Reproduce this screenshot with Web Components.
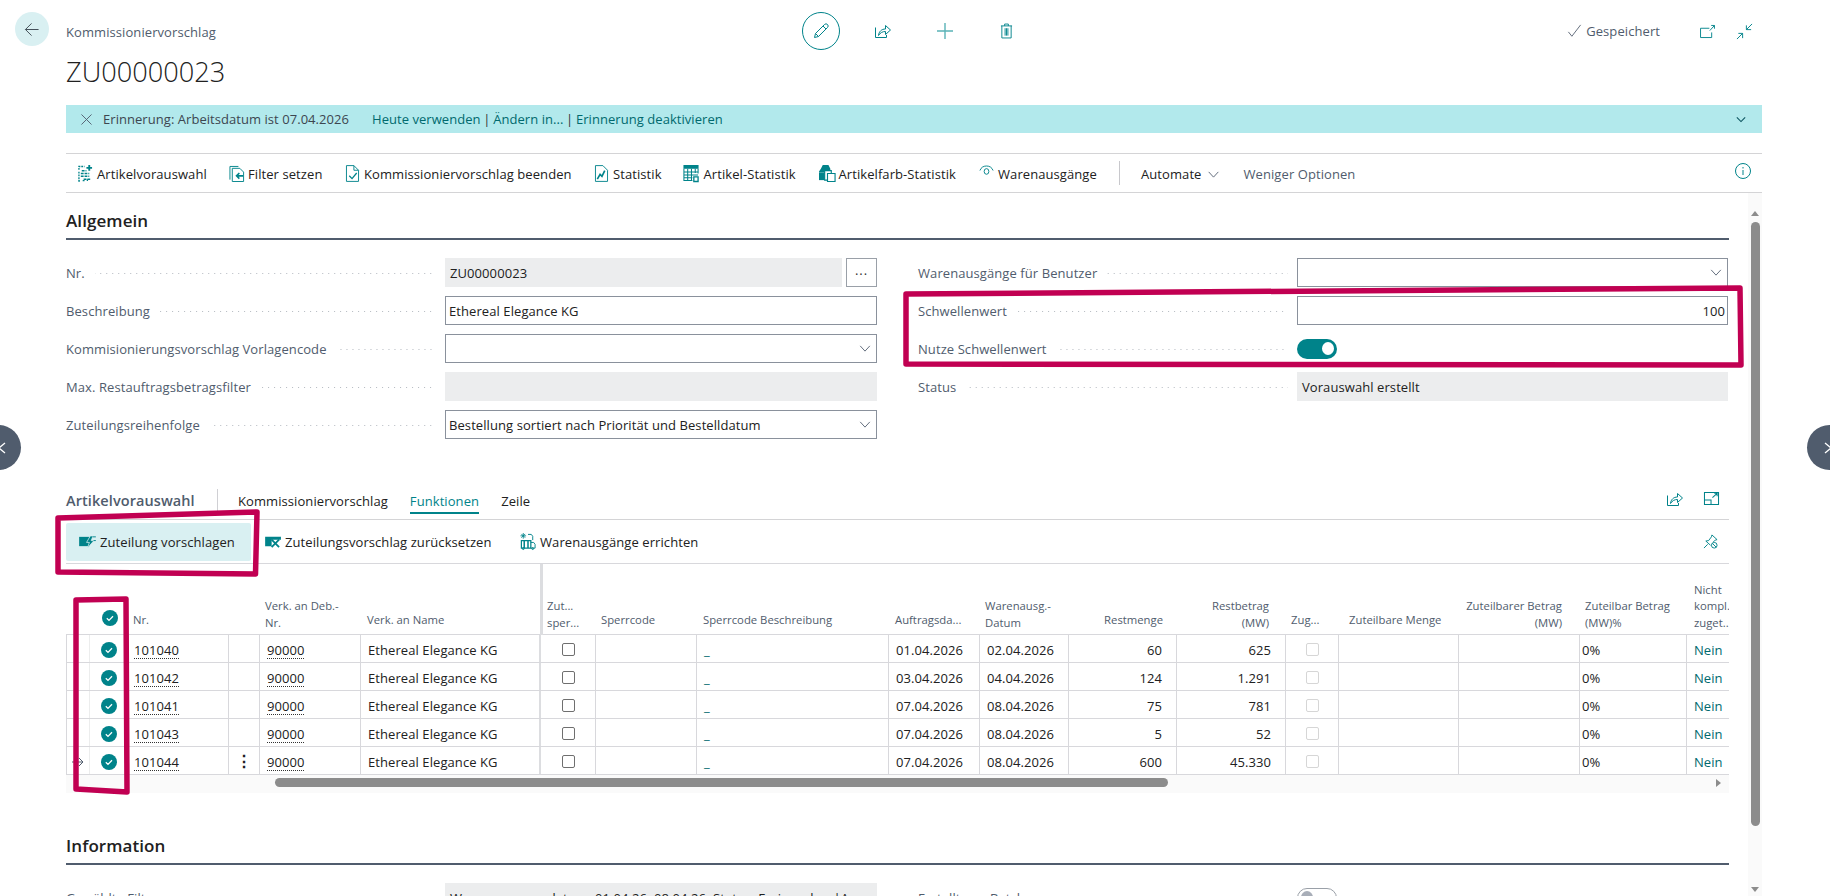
<!DOCTYPE html>
<html lang="de"><head><meta charset="utf-8"><title>Kommissioniervorschlag</title>
<style>
html,body{margin:0;padding:0;background:#fff;overflow:hidden}
body{font:13px/18px "Open Sans","Noto Sans",sans-serif;color:#212121}
</style></head><body>
<bc-app></bc-app>
<script>
const T='#00838a';
const I={
back:`<svg viewBox="0 0 16 16" fill="none" stroke="#3c4650" stroke-width="1"><path d="M15 8H1M7.500 1.500 1 8l6.500 6.500"/></svg>`,
pencil:`<svg viewBox="0 0 16 16" fill="none" stroke="${T}"><path d="M1.500 14.500l1-4L11.500 1.500a1.500 1.500 0 0 1 3 3l-9 9zM2.500 10.500l3 3M10 3l3 3"/></svg>`,
share:`<svg viewBox="0 0 16 16" fill="none" stroke="${T}"><path d="M.5 4.500v10h11v-2.500M3.500 12.500c.5-4 3-6.500 7-6.500V2.500L15.500 7l-5 4.500V8.500c-3 0-5 1-7 4z"/></svg>`,
plus:`<svg viewBox="0 0 16 16" fill="none" stroke="#5ab3b7" stroke-width="1.400"><path d="M8 0v16M0 8h16"/></svg>`,
trash:`<svg viewBox="0 0 14 16" fill="none" stroke="${T}"><path d="M1 2.500h12M2 2.500v13h10v-13M5 2.500V.5h4v2M5.500 5v8M7 5v8M8.500 5v8"/></svg>`,
check:`<svg viewBox="0 0 16 16" fill="none" stroke="#505c6d"><path d="M1 9l4 5L15 1"/></svg>`,
open:`<svg viewBox="0 0 16 14" fill="none" stroke="${T}" stroke-width="1"><path d="M10 3.500H.5v10h12V8M10.500 6l5-5.500M12 .5h3.500V4"/></svg>`,
collapse:`<svg viewBox="0 0 18 18" fill="none" stroke="${T}"><path d="M17 1l-6 6M11 2.500V7h5M1 17l6-6M2.500 11H7v5"/></svg>`,
x:`<svg viewBox="0 0 12 12" fill="none" stroke="#505c6d"><path d="M.5.5l11 11M11.500.5l-11 11"/></svg>`,
chev:`<svg viewBox="0 0 12 8" fill="none" stroke="#505c6d"><path d="M.5 1L6 7l5.500-6"/></svg>`,
chevT:`<svg viewBox="0 0 12 8" fill="none" stroke="#0b5560" stroke-width="1.300"><path d="M1 1.500L6 6.500l5-5"/></svg>`,
info:`<svg viewBox="0 0 16 16" fill="none" stroke="${T}"><circle cx="8" cy="8" r="7.500"/><path d="M8 7v5M8 4v1.500"/></svg>`,
av:`<svg viewBox="0 0 16 18" fill="none" stroke="${T}" stroke-width="1.400"><path d="M1 5V1.500h6M1 7v10h2M5 16.500h2M10 17v-2" stroke-dasharray="2 1"/><path d="M12 0v6M9 3h6" stroke-width="2"/><path d="M4 6h5M3 9h9M3 12h9M6 15h7" stroke-width="1.600" stroke-dasharray="3 1"/></svg>`,
filter:`<svg viewBox="0 0 17 18" fill="none" stroke="${T}"><path d="M1 1.500v14M1 1.500h9M3.500 17.500V3.500h8l4 4v10z"/><path d="M15 11.500H8M11 8.500l-3 3 3 3" stroke-width="1.700"/></svg>`,
finish:`<svg viewBox="0 0 14 18" fill="none" stroke="${T}"><path d="M.5.5h8l5 5v12H.5z"/><path d="M8.500.5v5h5"/><path d="M3.500 11.500l3 3 5-6" stroke-width="1.400"/></svg>`,
stat:`<svg viewBox="0 0 14 18" fill="none" stroke="${T}"><path d="M.5.5h8l5 5v12H.5z"/><path d="M2.500 15l3-5 2 2 3-6" stroke-width="1.800"/></svg>`,
astat:`<svg viewBox="0 0 16 18"><path d="M0 0h16v4H0z" fill="${T}"/><g fill="none" stroke="${T}" stroke-width="1.100"><path d="M.5 4v12.500h9M.5 7.500h15M.5 10.500h15M.5 13.500h9M4.500 4v12.500M8.500 4v12.500M12.500 4v4.500M15.500 4v5"/><path d="M11 12.500h4.500v5H11z" stroke-width="1.400"/></g></svg>`,
afarb:`<svg viewBox="0 0 18 18"><path d="M0 7l2-3h10v4H0zM4 0h6l2 4H2z" fill="${T}"/><path d="M0 8h8v8H0z" fill="${T}"/><g fill="#fff" stroke="${T}" stroke-width="1.200"><path d="M6 6h7v10H6z"/><path d="M9 9h8v8.500H9z"/></g></svg>`,
wa:`<svg viewBox="0 0 18 16" fill="none" stroke="${T}"><path d="M2 8a7.500 7.500 0 0 1 14 0"/><ellipse cx="9" cy="9" rx="2.500" ry="3"/></svg>`,
zv:`<svg viewBox="0 0 18 14"><path d="M0 2h11v10H0z" fill="${T}"/><path d="M12 1l-4 7h3l-2 6 7-8h-3l2-5z" fill="${T}" stroke="#d9f0f2" stroke-width=".8"/><path d="M14.500 2H18M15.500 6H18" stroke="${T}"/></svg>`,
zr:`<svg viewBox="0 0 18 14"><path d="M0 2h17v3H0zM0 5h7v7H0z" fill="${T}"/><path d="M7 5l8 8M15 5l-8 8" stroke="${T}" stroke-width="2" fill="none"/></svg>`,
we:`<svg viewBox="0 0 16 18" fill="none" stroke="${T}"><path d="M3 0v6M0 3h6M1 1l4 4M5 1L1 5" stroke-width=".9"/><path d="M8 1.500h3.500l1.500 2v4"/><path d="M1 8h10v8H1z" stroke-width="1.300"/><path d="M4 8v8M8 8v8" stroke-width="1.600"/><path d="M11 10h3l1.500 2v4H11"/><circle cx="3" cy="16.500" r="1"/><circle cx="13" cy="16.500" r="1"/></svg>`,
open2:`<svg viewBox="0 0 16 16" fill="none" stroke="${T}" stroke-width="1.100"><path d="M.5 1.500h15v13H.5zM.5 9.500h7v5M9 7l5-4.500M11 2.500h3v3"/></svg>`,
pin:`<svg viewBox="0 0 16 16" fill="none" stroke="${T}"><path d="M1 15l4-4M3 7.500l3-.5 3-4 .5-2L15 6l-2 .5-2 2M3 7.500L8 12"/><circle cx="12" cy="12" r="3"/><path d="M10 10l4 4"/></svg>`,
};
function def(name,css,html){
  customElements.define(name,class extends HTMLElement{
    constructor(){super();this.attachShadow({mode:'open'})}
    connectedCallback(){
      const h=typeof html==='function'?html(this):html;
      this.shadowRoot.innerHTML=`<style>${css}</style>${h}`;
    }
  });
}
/* icon */
def('bc-icon',`:host{display:inline-flex;align-items:center;justify-content:center;flex:none}svg{display:block;width:100%;height:100%;overflow:visible}`,
 e=>I[e.getAttribute('name')]);

/* page header */
def('bc-header',`
:host{display:block;height:105px;box-sizing:border-box;padding-top:12px}
.top{display:flex;align-items:center;height:38px}
.back{width:34px;height:34px;margin:-4px 17px 0 -51px;border-radius:50%;background:#d9f0f2;display:flex;align-items:center;justify-content:center;flex:none}
.back bc-icon{width:16px;height:15px}
.crumb{flex:0 0 736px;color:#505c6d;margin-top:1px}
.acts{display:flex;align-items:center}
.edit{width:36px;height:36px;border:1px solid ${T};border-radius:50%;display:flex;align-items:center;justify-content:center}
.edit bc-icon{width:16px;height:16px}
.right{margin-left:auto;margin-right:9px;display:flex;align-items:center;color:#505c6d}
h1{margin:4px 0 0;font-weight:300;font-size:27.200px;letter-spacing:0;line-height:36px;color:#212121}
`,`<div class="top"><div class="back"><bc-icon name="back"></bc-icon></div>
<div class="crumb">Kommissioniervorschlag</div>
<div class="acts"><div class="edit"><bc-icon name="pencil"></bc-icon></div>
<bc-icon name="share" style="width:16px;height:16px;margin-left:35px"></bc-icon>
<bc-icon name="plus" style="width:16px;height:16px;margin-left:46px"></bc-icon>
<bc-icon name="trash" style="width:13px;height:16px;margin-left:47px"></bc-icon></div>
<div class="right"><bc-icon name="check" style="width:15px;height:14px;margin-right:4px"></bc-icon><span>Gespeichert</span>
<bc-icon name="open" style="width:15px;height:13px;margin-left:40px"></bc-icon>
<bc-icon name="collapse" style="width:17px;height:17px;margin-left:21px"></bc-icon></div></div>
<h1>ZU00000023</h1>`);

/* reminder banner */
def('bc-banner',`
:host{display:flex;align-items:center;height:28px;background:#b2e9ec;color:#3c4650;letter-spacing:.05px}
bc-icon.x{width:11px;height:11px;margin:0 11px 0 15px}
a{color:#00696e;text-decoration:none}
.s{margin:0 2.700px;color:#333}
.msg{margin-right:23px}
.c{margin-left:auto;margin-right:16px;width:10px;height:7px}
`,`<bc-icon class="x" name="x"></bc-icon><span class="msg">Erinnerung: Arbeitsdatum ist 07.04.2026</span>
<a>Heute verwenden</a><span class="s">|</span><a>Ändern in...</a><span class="s">|</span><a>Erinnerung deaktivieren</a>
<bc-icon class="c" name="chevT"></bc-icon>`);

/* action button */
def('bc-action',`
:host{display:inline-flex;align-items:center;flex:none;color:#212121;white-space:nowrap;height:38px;box-sizing:border-box}
bc-icon{width:16px;height:17px;margin-right:var(--g,4px)}
`,e=>`<bc-icon name="${e.getAttribute('icon')}" style="${e.getAttribute('istyle')||''}"></bc-icon><slot></slot>`);

/* main toolbar */
def('bc-toolbar',`
:host{display:flex;align-items:center;height:40px;margin-top:20px;box-sizing:border-box;border-top:1.500px solid #d4d4d6;border-bottom:1.500px solid #d4d4d6;padding:2px 0 0 12px}
.sep{width:1px;height:24px;background:#c8c8cc;margin-right:21px;margin-top:-2px}
.a{color:#212121}.ch{width:11px;height:7px;margin:1px 24px 0 7px}
.g{color:#505c6d}.i{width:16px;height:16px;margin-left:auto;margin-right:11px;margin-top:-6px}
`,`<bc-action icon="av" style="width:151px;--g:4px" istyle="width:15px;margin-top:-2px"><span>Artikelvorauswahl</span></bc-action>
<bc-action icon="filter" style="width:117px;--g:3px" istyle="margin-top:-2px"><span>Filter setzen</span></bc-action>
<bc-action icon="finish" style="width:249px;--g:5px" istyle="width:13px;margin-top:-2px"><span>Kommissioniervorschlag beenden</span></bc-action>
<bc-action icon="stat" style="width:87.500px;--g:5px" istyle="width:13px;margin-top:-2px"><span>Statistik</span></bc-action>
<bc-action icon="astat" style="width:136px;--g:5px" istyle="margin-top:-2px"><span>Artikel-Statistik</span></bc-action>
<bc-action icon="afarb" style="width:159.500px;--g:3px" istyle="width:17px;margin-top:-2px"><span>Artikelfarb-Statistik</span></bc-action>
<bc-action icon="wa" style="width:141px;--g:3px" istyle="width:17px;height:15px;margin-top:-7px"><span>Warenausgänge</span></bc-action>
<div class="sep"></div><span class="a">Automate</span><bc-icon class="ch" name="chev"></bc-icon><span class="g">Weniger Optionen</span>
<bc-icon class="i" name="info"></bc-icon>`);

/* section heading */
def('bc-section',`
:host{display:block}
h2{margin:0;font-weight:600;font-size:17px;line-height:22px;color:#212121;padding-bottom:6px;border-bottom:2px solid #505c6d}
.grid{display:grid;grid-template-columns:811px 810px;column-gap:41px;padding-top:18px;row-gap:9px}
`,e=>`<h2>${e.getAttribute('title')}</h2><div class="grid"><slot></slot></div>`);

/* field */
def('bc-field',`
:host{display:flex;height:29px;align-items:center;min-width:0}
.l{flex:0 0 379px;display:flex;align-items:center;height:100%;color:#505c6d;box-sizing:border-box;padding-right:9px}
.l span{white-space:nowrap;margin-right:10px}
.d{flex:1;height:1px;margin-top:2px;background:linear-gradient(to right,#b4b9c0 1px,transparent 1px) right/6px 1px repeat-x}
.f{flex:1;height:100%;box-sizing:border-box;display:flex;align-items:center;padding:0 2px 0 3px;border:1px solid #8a919c;white-space:nowrap;overflow:hidden;color:#212121;min-width:0}
.ro{background:#ecedee;border:0;padding:0 5px}
.num{justify-content:flex-end}
.f bc-icon{width:12px;height:7px;margin-left:auto;margin-right:3px}
.more{flex:0 0 31px;height:100%;box-sizing:border-box;border:1px solid #9aa0a8;margin-left:4px;display:flex;align-items:center;justify-content:center;letter-spacing:1px;line-height:1;padding-bottom:5px;color:#333}
.tg{width:40px;height:20px;border-radius:10px;background:${T};display:flex;align-items:center;justify-content:flex-end;padding-right:3px;box-sizing:border-box}
.tg i{display:block;width:12px;height:13px;border-radius:50%;background:#fff}
.tg.off{background:#fff;border:1px solid #9aa0a8;justify-content:flex-start;padding:0 0 0 3px}
.tg.off i{background:#a8aeb8}
`,e=>{
 const k=e.getAttribute('kind')||'text',v=e.getAttribute('value')||'';
 let c;
 if(k==='toggle'||k==='off')c=`<div class="tg ${k==='off'?'off':''}"><i></i></div><div style="flex:1"></div>`;
 else c=`<div class="f ${k==='ro'||k==='romore'?'ro':''} ${k==='num'?'num':''}">${v}${k==='sel'?'<bc-icon name="chev"></bc-icon>':''}</div>${k==='romore'?'<div class="more">...</div>':''}`;
 return `<div class="l"><span>${e.getAttribute('label')}</span><div class="d"></div></div>${c}`;
});

/* grid table */
const COLS=[66,90,129,229,260,361,541,596,697,889,980,1069,1177,1286,1339,1459,1580,1687,1729];
const TPL=COLS.slice(1).map((c,i)=>(c-COLS[i])+'px').join(' ');
const HEAD=[['',''],['@',''],['Nr.','',133],['',''],['Verk. an Deb.-<br>Nr.','',265],['Verk. an Name','',367],['Zut...<br>sper...','',547],['Sperrcode','',601],['Sperrcode Beschreibung','',703],['Auftragsda...','',895],['Warenausg.-<br>Datum','',985],['Restmenge','r',1163],['Restbetrag<br>(MW)','r',1269],['Zug...','',1291],['Zuteilbare Menge','',1349],['Zuteilbarer Betrag<br>(MW)','r',1562],['Zuteilbar Betrag<br>(MW)%','',1585],['Nicht<br>kompl.<br>zuget...','',1694]];
const ROWS=[['101040','01.04.2026','02.04.2026','60','625'],['101042','03.04.2026','04.04.2026','124','1.291'],['101041','07.04.2026','08.04.2026','75','781'],['101043','07.04.2026','08.04.2026','5','52'],['101044','07.04.2026','08.04.2026','600','45.330']];
const mark=`<svg viewBox="0 0 16 16" width="16" height="16"><circle cx="8" cy="8" r="8" fill="${T}"/><path d="M4.800 8.200l2.200 2.200 4-4.200" fill="none" stroke="#fff" stroke-width="1.300"/></svg>`;
def('bc-table',`
:host{display:block;position:relative;width:1663px;overflow:hidden}
.h,.r{display:grid;grid-template-columns:${TPL};position:relative}
.h{height:71px;border-bottom:1.500px solid #d8d8dc;box-sizing:border-box;align-items:end;font-size:11.300px;letter-spacing:0;line-height:16.500px;color:#505c6d}
.h div{padding-bottom:6px;white-space:nowrap;position:relative;overflow:hidden}
.h div.m{padding-bottom:3px}
.h .sel{padding-bottom:8px;display:flex;justify-content:center}
.r{height:28px;box-sizing:border-box;border-bottom:1px solid #d8d8dc;font-size:13px;line-height:18px}
.c{display:flex;align-items:center;box-sizing:border-box;border-right:1px solid #d8d8dc;white-space:nowrap;padding:2px 0 0 7px;min-width:0;height:27px}
.c:first-child{border-left:1px solid #d8d8dc}
.num{justify-content:flex-end;padding:2px 14px 0 0}
.mk{border-right-color:#eceded;padding:2px 0 0;justify-content:center;color:#505c6d}
.lnk u{text-decoration:underline dotted #333 1px;text-underline-offset:3px}
.fz{border-right:2.500px solid #dcdde0}
.cb{width:13px;height:13px;box-sizing:border-box;border:1px solid #6f6f6f;border-radius:2px;margin:auto;position:relative}
.cb.dis{border-color:#d6d6d6}
.t{color:#00696e}
.us{color:#00696e}
.dots{justify-content:center;padding:0;font-weight:700;font-size:16px;line-height:1}
.divider{position:absolute;left:474px;top:0;height:71px;width:2.500px;background:#dcdde0}
.sb{height:18px;background:#fafafa;position:relative;display:flex;align-items:center}
.th{margin-left:209px;width:893px;height:9px;border-radius:5px;background:#8c8c8c;margin-top:-3px}
.ar{margin-left:auto;margin-right:8px;margin-top:-3px;width:0;height:0;border-left:5px solid #8c8c8c;border-top:4px solid transparent;border-bottom:4px solid transparent}
`,()=>{
 let h=`<div class="h">`;
 HEAD.forEach((c,i)=>{
  if(c[0]==='@'){h+=`<div class="sel">${mark}</div>`;return}
  const st=c[2]!==undefined?(c[1]==='r'?`text-align:right;padding-right:${COLS[i+1]-c[2]}px`:`padding-left:${c[2]-COLS[i]}px`):'';
  h+=`<div class="${c[0].includes('<br>')?'m':''}" style="${st}">${c[0]}</div>`;
 });
 h+=`<span class="divider"></span></div>`;
 ROWS.forEach((r,i)=>{
  const last=i===4;
  h+=`<div class="r">
  <div class="c mk">${last?'<svg width="12" height="10" viewBox="0 0 12 10" fill="none" stroke="#505c6d"><path d="M0 5h11M7 1l4 4-4 4"/></svg>':''}</div>
  <div class="c mk" style="border-right:1px solid #d8d8dc">${mark}</div>
  <div class="c lnk" style="padding-left:5px"><u>${r[0]}</u></div>
  <div class="c dots">${last?'⋮':''}</div>
  <div class="c lnk"><u>90000</u></div>
  <div class="c fz">Ethereal Elegance KG</div>
  <div class="c" style="padding-left:0"><i class="cb"></i></div>
  <div class="c"></div>
  <div class="c us">_</div>
  <div class="c">${r[1]}</div>
  <div class="c">${r[2]}</div>
  <div class="c num">${r[3]}</div>
  <div class="c num">${r[4]}</div>
  <div class="c" style="padding-left:0"><i class="cb dis"></i></div>
  <div class="c"></div><div class="c"></div>
  <div class="c" style="padding-left:2px">0%</div>
  <div class="c t" style="border-right:0">Nein</div>
  </div>`;
 });
 h+=`<div class="sb"><div class="th"></div><div class="ar"></div></div>`;
 return h;
});

/* lines subpage */
def('bc-subpage',`
:host{display:block;margin-top:50px;width:1663px}
.tabs{height:31px;display:flex;align-items:flex-start;border-bottom:1.500px solid #d4d4d6;box-sizing:border-box;position:relative}
.ttl{font-weight:600;color:#505c6d;font-size:14.500px;width:151px;line-height:24px;flex:none}
.sep{width:1px;height:22px;background:#d0d0d4;margin-right:20px}
.tab{line-height:24px;color:#212121;margin-right:22px;height:24px}
.tab.on{color:${T};border-bottom:2px solid ${T};height:23px}
.ri{margin-left:auto;display:flex;margin-right:10px;gap:21px;margin-top:2px}
.acts{display:flex;align-items:center;height:44px;border-bottom:1.500px solid #d8d8dc;box-sizing:border-box}
.on2{background:#d9f0f2;width:185px;height:38px;border-radius:2px;padding-left:13px;box-sizing:border-box;margin-right:14px}
.pin{margin-left:auto;margin-right:11px;width:15px;height:15px}
`,`<div class="tabs"><span class="ttl">Artikelvorauswahl</span><span class="sep"></span>
<span class="tab">Kommissioniervorschlag</span><span class="tab on">Funktionen</span><span class="tab">Zeile</span>
<div class="ri"><bc-icon name="share" style="width:16px;height:16px"></bc-icon><bc-icon name="open2" style="width:15px;height:15px"></bc-icon></div></div>
<div class="acts"><bc-action class="on2" icon="zv" style="--g:4px" istyle="width:17px;height:13px"><span>Zuteilung vorschlagen</span></bc-action>
<bc-action icon="zr" style="width:255px;--g:3px" istyle="width:17px;height:13px"><span>Zuteilungsvorschlag zurücksetzen</span></bc-action>
<bc-action icon="we" style="--g:4px"><span>Warenausgänge errichten</span></bc-action>
<bc-icon class="pin" name="pin"></bc-icon></div>
<bc-table></bc-table>`);

/* vertical scrollbar */
def('bc-scrollbar',`
:host{display:flex;flex-direction:column;align-items:center;width:14px;background:#fafafa;height:703px;flex:none;padding-top:18px;box-sizing:border-box}
.up{width:0;height:0;border-bottom:5px solid #8c8c8c;border-left:4px solid transparent;border-right:4px solid transparent;margin-bottom:6px}
.th{width:9px;height:604px;border-radius:5px;background:#8c8c8c}
.dn{margin-top:auto;margin-bottom:4px;width:0;height:0;border-top:5px solid #8c8c8c;border-left:4px solid transparent;border-right:4px solid transparent}
`,`<div class="up"></div><div class="th"></div><div class="dn"></div>`);

/* pink hand-drawn annotations */
def('bc-marks',`
:host{position:absolute;left:0;top:0;width:1830px;height:896px;pointer-events:none;display:block}
svg{display:block}
.n{position:absolute;top:425px;width:45px;height:45px;border-radius:50%;background:#505c6d}
`,`<div class="n" style="left:-24px"></div><div class="n" style="left:1807px"></div>
<svg style="position:absolute;left:0;top:0" width="1830" height="896" fill="none" stroke-linejoin="round">
<g stroke="#fff" stroke-width="1.300"><path d="M5 443l-6 5 6 5"/><path d="M1825 443l6 5-6 5"/></g>
<g stroke="#c10052" stroke-width="5.500">
<path d="M906 294L1740 288 1741 365 906 364Z"/>
<path d="M58 518L257 512 255.500 574 58 572Z"/>
<path d="M76 600L126 599 127 792 76 789Z"/>
</g></svg>`);

/* application frame */
def('bc-app',`
:host{display:block;position:relative;width:1830px;height:896px;overflow:hidden;background:#fff;font:13px/18px "Open Sans","Noto Sans",sans-serif;letter-spacing:.08px;color:#212121}
.frame{padding-left:66px;width:1696px}
.body{display:flex;gap:19px;align-items:flex-start}
.main{width:1663px;flex:none;padding-top:17px}
.gap{height:42px}
`,`<div class="frame"><bc-header></bc-header><bc-banner></bc-banner><bc-toolbar></bc-toolbar>
<div class="body"><div class="main">
<bc-section title="Allgemein">
<bc-field label="Nr." kind="romore" value="ZU00000023"></bc-field>
<bc-field label="Warenausgänge für Benutzer" kind="sel"></bc-field>
<bc-field label="Beschreibung" value="Ethereal Elegance KG"></bc-field>
<bc-field label="Schwellenwert" kind="num" value="100"></bc-field>
<bc-field label="Kommisionierungsvorschlag Vorlagencode" kind="sel"></bc-field>
<bc-field label="Nutze Schwellenwert" kind="toggle"></bc-field>
<bc-field label="Max. Restauftragsbetragsfilter" kind="ro"></bc-field>
<bc-field label="Status" kind="ro" value="Vorauswahl erstellt"></bc-field>
<bc-field label="Zuteilungsreihenfolge" kind="sel" value="Bestellung sortiert nach Priorität und Bestelldatum"></bc-field>
<div></div>
</bc-section>
<bc-subpage></bc-subpage>
<div class="gap"></div>
<bc-section title="Information">
<bc-field label="Gewählte Filter" kind="ro" value="Warenausgangsdatum: 01.04.26..08.04.26, Status: Freigegeben|Aus..."></bc-field>
<bc-field label="Erstellt von Batch" kind="off"></bc-field>
</bc-section>
</div><bc-scrollbar></bc-scrollbar></div></div><bc-marks></bc-marks>`);
</script></body></html>
